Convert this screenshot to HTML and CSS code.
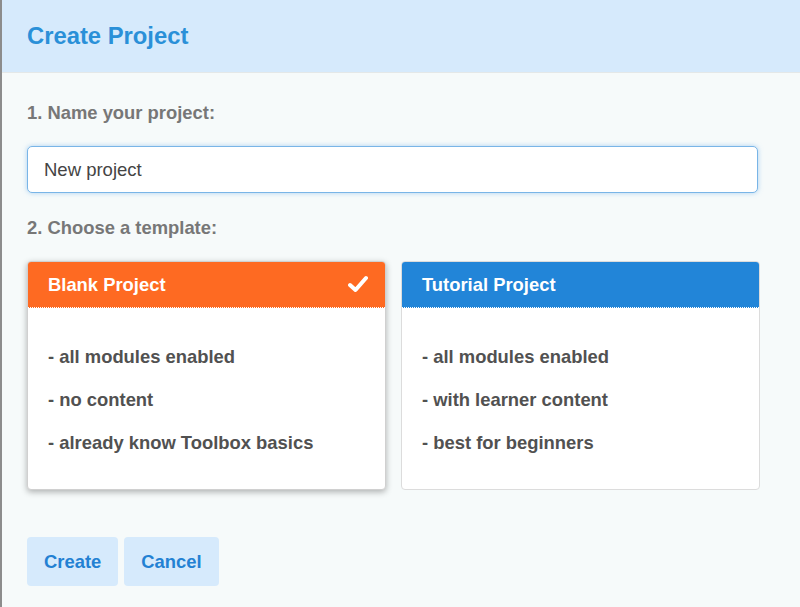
FILE: index.html
```html
<!doctype html>
<html lang="en">
<head>
	<meta charset="UTF-8">
	<title>Create Project</title>
	<link rel="stylesheet" href="styles.css">
</head>
<body>
	<div class="dialog">
		<div class="dialog-head">
			<h1>Create Project</h1>
		</div>
		<div class="dialog-body">
			<label class="step" for="name">1. Name your project:</label>
			<input type="text" id="name" class="name-input" value="New project">

			<div class="step">2. Choose a template:</div>
			<div class="templates">
				<div class="card card-blank selected">
					<div class="card-head">
						<span>Blank Project</span>
						<svg class="check" width="20" height="18" viewBox="0 0 20 18">
							<path d="M2 10 L7.5 15 L18 3" fill="none" stroke="#fff" stroke-width="4" stroke-linecap="round" stroke-linejoin="round"/>
						</svg>
					</div>
					<ul class="card-list">
						<li>- all modules enabled</li>
						<li>- no content</li>
						<li>- already know Toolbox basics</li>
					</ul>
				</div>
				<div class="card card-tutorial">
					<div class="card-head">
						<span>Tutorial Project</span>
					</div>
					<ul class="card-list">
						<li>- all modules enabled</li>
						<li>- with learner content</li>
						<li>- best for beginners</li>
					</ul>
				</div>
			</div>

			<div class="actions">
				<button class="btn">Create</button>
				<button class="btn">Cancel</button>
			</div>
		</div>
	</div>
</body>
</html>
```

FILE: styles.css
```css
*{
	padding:0;
	margin:0;
	box-sizing:border-box;
}
html,body{
	height:100%;
}
body{
	font-family:"Liberation Sans", Arial, sans-serif;
	background:#f6fafa;
}
.dialog{
	min-height:100%;
	border-left:2px solid #8c8c8c;
	background:#f6fafa;
}
.dialog-head{
	height:73px;
	background:#d6eafc;
	border-bottom:1px solid #e4e8e8;
	display:flex;
	align-items:center;
	padding-left:25px;
}
.dialog-head h1{
	font-size:23.8px;
	font-weight:bold;
	color:#2a90d8;
	margin-top:-1px;
}
.dialog-body{
	padding:29px 42px 0 25px;
}
.step{
	display:block;
	font-size:18.4px;
	line-height:22px;
	font-weight:bold;
	color:#777;
}
.name-input{
	display:block;
	width:100%;
	height:47px;
	margin:22px 0 24px;
	padding:0 16px;
	font:18.5px "Liberation Sans", Arial, sans-serif;
	color:#444;
	background:#fff;
	border:1px solid #79b5e7;
	border-radius:5px;
	box-shadow:0 0 5px rgba(110,175,235,.55);
	outline:none;
}
.templates{
	display:flex;
	gap:15px;
	margin:22px -2px 0 0;
}
.card{
	flex:1;
	height:229px;
	background:#fff;
	border-radius:4px;
	border:1px solid #dcdcdc;
	overflow:hidden;
}
.card.selected{
	border-color:#d0d0d0;
	box-shadow:0 2px 6px rgba(0,0,0,.3);
}
.card-head{
	height:46px;
	display:flex;
	align-items:center;
	justify-content:space-between;
	padding:0 17px 0 20px;
	font-size:18.4px;
	font-weight:bold;
	color:#fff;
	border-bottom:1px dotted #fff;
}
.card-blank .card-head{
	background:#fe6a22;
}
.card-tutorial .card-head{
	background:#2285d8;
}
.check{
	display:block;
	margin-top:-2px;
}
.card-list{
	list-style:none;
	padding:27px 20px 0;
}
.card-list li{
	font-size:18.4px;
	line-height:43px;
	font-weight:bold;
	color:#515151;
}
.actions{
	display:flex;
	gap:6px;
	margin-top:47px;
}
.btn{
	height:49px;
	padding:0 17px;
	font:bold 18.4px "Liberation Sans", Arial, sans-serif;
	color:#2381d3;
	background:#d6eafc;
	border:none;
	border-radius:4px;
	cursor:pointer;
}
```
